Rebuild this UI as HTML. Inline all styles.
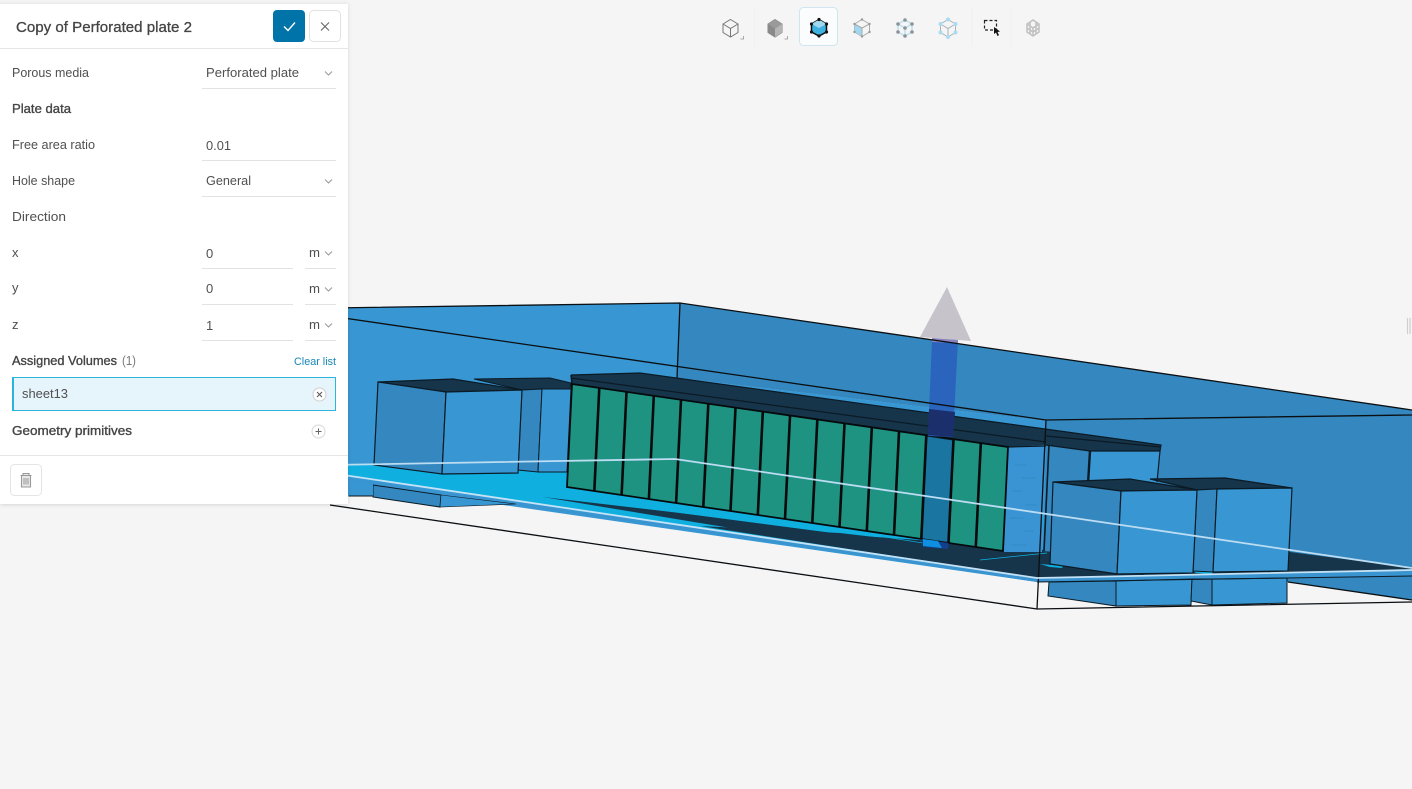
<!DOCTYPE html>
<html><head><meta charset="utf-8"><style>
html,body{margin:0;padding:0;background:#f5f5f5;width:1412px;height:789px;overflow:hidden}
svg{display:block}
text{font-family:"Liberation Sans",sans-serif;font-size:13px;fill:#505050}
.m{stroke:#444;stroke-width:.35;fill:#444}
</style></head><body>
<svg width="1412" height="789" viewBox="0 0 1412 789" xmlns="http://www.w3.org/2000/svg">
<defs><filter id="b" x="-5%" y="-5%" width="110%" height="110%"><feGaussianBlur stdDeviation="2"/></filter></defs>
<rect width="1412" height="789" fill="#f5f5f5"/>
<!-- 3D scene -->
<polygon points="330,308 680,303 677,378 1046,421 1412,415 1412,600 1288,582 1037,582 330,480" fill="#3897d3"/>
<polygon points="680,303 1412,410 1412,600 1288,582 1046,560 1046,421 677,378" fill="#3488bf"/>
<polygon points="1046,421 1412,415 1412,600 1288,582 1046,570" fill="#3488bf"/>
<polygon points="677,378 1046,421 1046,450 672,460" fill="#3897d3"/>
<!-- arrow head -->
<polygon points="947,287 920,337 971,341" fill="#c6c3cb"/>
<!-- floor -->
<polygon points="330,466 675,459 1045,513 1037,578 330,474" fill="#0fb0e0"/>
<polygon points="330,476 1037,578 1412,570 1412,576 1037,582 700,531 500,503 330,479" fill="#3a94cf"/>
<polygon points="543,497 680,513 848,535 990,545 1045,550 1290,552 1412,568 1412,570 1037,578 700,523" fill="#16354a"/>
<polygon points="840,533 1003,552 1010,553 1045,552 1045,578 1037,578 700,526" fill="#16354a"/>
<polygon points="680,505 940,546 925,543 850,531 680,513" fill="#0fb0e0"/>
<polygon points="1040,564 1063,566 1062,568 1050,567" fill="#0fb0e0"/>
<path d="M980,560L1047,553" stroke="#0fb0e0" stroke-width=".8" fill="none"/>
<polygon points="1193,571 1213,572 1212,574 1196,573" fill="#0fb0e0"/>
<!-- lower part of left boxes -->
<polygon points="373,485 441,495 440,507 373,497" fill="#3488bf" stroke="#0b1a25" stroke-width="1"/>
<polygon points="441,495 516,504 440,507" fill="#3897d3" stroke="#0b1a25" stroke-width=".6"/>
<polygon points="330,478 373,484 373,496 330,497" fill="#3897d3"/>
<path d="M349,496L373,496" stroke="#111" stroke-width="1" fill="none"/>
<!-- box B -->
<polygon points="474,379 550,378 571,383 570,389 542,389 522,390" fill="#16354a" stroke="#0b1a25" stroke-width="1"/>
<polygon points="522,390 542,389 538,472 518,470" fill="#3488bf" stroke="#0b1a25" stroke-width="1"/>
<polygon points="542,389 571,389 567,472 538,472" fill="#3897d3" stroke="#0b1a25" stroke-width="1"/>
<!-- box A -->
<polygon points="378,382 453,379 522,390 446,392" fill="#16354a" stroke="#0b1a25" stroke-width="1.2"/>
<polygon points="378,382 446,392 442,474 374,465" fill="#3488bf" stroke="#0b1a25" stroke-width="1.2"/>
<polygon points="446,392 522,390 518,473 442,474" fill="#3897d3" stroke="#0b1a25" stroke-width="1.2"/>
<!-- box C behind -->
<polygon points="1046,445 1090,451 1088,555 1043,551" fill="#3488bf"/>
<polygon points="1090,451 1160,451 1157,490 1088,490" fill="#3897d3"/>
<path d="M1090,451L1088,484" stroke="#0b1a25" stroke-width="2.4" fill="none"/>
<path d="M1160,451L1157,482" stroke="#0b1a25" stroke-width="1.2" fill="none"/>
<path d="M1049,445L1044,551" stroke="#0b1a25" stroke-width="1.6" fill="none"/>
<!-- teal block end -->
<polygon points="1008,447 1045,446 1042,552 1003,552" fill="#3a94d3"/>
<g stroke="#2a7cb0" stroke-width=".7" opacity=".7"><path d="M1015,465h12M1022,478h14M1012,491h10M1025,505h12M1010,518h14M1024,531h10M1012,545h14"/></g>
<!-- dark top -->
<polygon points="571,375 640,373 1161,445 1160,451 1090,451 1046,445 1008,447 572,384" fill="#16354a"/>
<path d="M571,375L640,373L1161,445L1160,451L1090,451L1046,445M572,384L1008,447L1046,446M571,378L1046,442M1046,436L1161,447" stroke="#0b1a25" stroke-width="1.2" fill="none"/>
<path d="M571,375L572,384" stroke="#0b1a25" stroke-width="1.5"/>
<!-- teal panels -->
<polygon points="572,384 1008,447 1003,551 567,487" fill="#1f9382"/>
<polygon points="926,435.500 953.500,439.500 948.500,543 921.500,539.500" fill="#1a76a0"/>
<g stroke="#050a0d" stroke-width="2.6" fill="none">
<path d="M599.300,388L594.300,491M626.500,392L621.600,495M653.800,396L648.900,499M681,400L676.100,503M708.300,404L703.300,507M735.500,408L730.500,511M762.800,412L757.800,515M790,416L785,519M817.300,420L812.300,523M844.500,424L839.500,527M871.800,428L866.800,531M899,432L894,535M926.300,435.500L921.300,539M953.500,439.500L948.500,543M980.800,443.500L975.800,547"/>
<path d="M572,384L1008,447L1003,551L567,487Z" stroke-width="1.8"/>
</g>
<!-- arrow shaft -->
<polygon points="932,339 958,340 953,437 928,436" fill="#2a62bd" opacity=".95"/>
<polygon points="929,409 955,412 953,437 928,435" fill="#1a2f6c"/>
<polygon points="932,338 958,340 958,343 932,342" fill="#8c83bd"/>
<polygon points="921.500,539 948.500,543 948,549 923,547" fill="#153f8c"/>
<polygon points="923,539 938,541 942,548 923,546" fill="#0f8fe0"/>
<path d="M927,436L953,440" stroke="#0b1a25" stroke-width="1"/>
<!-- box D lower -->
<polygon points="1049,582 1116,581 1116,606 1048,596" fill="#3488bf" stroke="#0b1a25" stroke-width="1"/>
<polygon points="1116,581 1192,579 1191,605 1116,606" fill="#3897d3" stroke="#0b1a25" stroke-width="1"/>
<polygon points="1192,579 1212,579 1212,605 1191,601" fill="#3488bf" stroke="#0b1a25" stroke-width="1"/>
<polygon points="1212,579 1287,578 1287,603 1212,605" fill="#3897d3" stroke="#0b1a25" stroke-width="1"/>
<!-- box E -->
<polygon points="1150,479 1225,478 1292,488 1217,489 1197,490" fill="#16354a" stroke="#0b1a25" stroke-width="1.2"/>
<polygon points="1197,490 1217,489 1213,572 1193,571" fill="#3488bf" stroke="#0b1a25" stroke-width="1"/>
<polygon points="1217,489 1292,488 1288,571 1213,572" fill="#3897d3" stroke="#0b1a25" stroke-width="1.2"/>
<!-- box D -->
<polygon points="1053,482 1130,479 1197,490 1121,491" fill="#16354a" stroke="#0b1a25" stroke-width="1.2"/>
<polygon points="1053,482 1121,491 1117,574 1050,564" fill="#3488bf" stroke="#0b1a25" stroke-width="1.2"/>
<polygon points="1121,491 1197,490 1193,573 1117,574" fill="#3897d3" stroke="#0b1a25" stroke-width="1.2"/>
<!-- wall strokes -->
<path d="M330,308L680,303L1412,410M330,316L1046,420L1412,415M680,303L677,378M1046,420L1037,609M330,505L1037,609L1412,602M1288,582L1412,600" stroke="#0b0f12" stroke-width="1.3" fill="none"/>
<path d="M330,465L675,459L1412,568" stroke="#bcdcf2" stroke-width="1.8" fill="none"/>
<path d="M330,473L1037,578L1412,570" stroke="#c4e2f6" stroke-width="1.8" fill="none"/>
<path d="M1037,582L1412,576" stroke="#0b1a25" stroke-width="1" fill="none"/>
<path d="M1407.500,318V334M1410,318V334" stroke="#cfcfcf" stroke-width="1.200"/>

<!-- toolbar -->
<rect x="799.500" y="7.500" width="38" height="38" rx="4" fill="#fafcfd" stroke="#cfe6f2"/>
<path d="M754.500,8V46M972,8V46M1011,8V46" stroke="#f0f0f0" stroke-width="1"/>
<path d="M743.500,36V39H740.500M787.500,36V39H784.500" stroke="#aaa" fill="none"/>
<g fill="none" stroke="#777" stroke-width="1">
<path d="M730.500,19.500L738,24V32.500L730.500,37L723,32.500V24ZM723,24L730.500,28.500L738,24M730.500,28.500V37"/>
</g>
<g>
<polygon points="775,19.500 782,24 782,32.500 775,37 768,32.500 768,24" fill="#8a8a8a" stroke="#888"/>
<polygon points="775,28.500 782,24 782,32.500 775,37" fill="#b5b5b5"/>
<polygon points="768,24 775,19.500 782,24 775,28.500" fill="#9a9a9a"/>
</g>
<g>
<polygon points="819,19.500 826.500,24 826.500,32 819,36 811.500,32 811.500,24" fill="#3fb1e0" stroke="#111" stroke-width="1.500"/>
<polygon points="811.500,24 819,19.500 826.500,24 819,28" fill="#9fd8ef"/>
<circle cx="819" cy="19.500" r="1.600" fill="#111"/><circle cx="826.500" cy="24" r="1.600" fill="#111"/><circle cx="826.500" cy="32" r="1.600" fill="#111"/><circle cx="819" cy="36" r="1.600" fill="#111"/><circle cx="811.500" cy="32" r="1.600" fill="#111"/><circle cx="811.500" cy="24" r="1.600" fill="#111"/>
</g>
<g>
<polygon points="862,19.500 869.500,24 869.500,32 862,36.500 854.500,32 854.500,24" fill="#f5f5f5" stroke="#aaa"/>
<polygon points="854.500,24 862,28 862,36.500 854.500,32" fill="#9fd8ef"/>
<path d="M854.500,24L862,28L869.500,24M862,28V36.500" stroke="#aaa" fill="none"/>
<g fill="#999"><circle cx="862" cy="19.500" r="1.200"/><circle cx="869.500" cy="24" r="1.200"/><circle cx="869.500" cy="32" r="1.200"/><circle cx="862" cy="36.500" r="1.200"/><circle cx="854.500" cy="32" r="1.200"/><circle cx="854.500" cy="24" r="1.200"/></g>
</g>
<g fill="none" stroke="#bcdfee" stroke-width="1.500"><path d="M905,20L912,24V32L905,36L898,32V24ZM898,24L905,28L912,24M905,28V36"/></g>
<g fill="#8d9499"><circle cx="905" cy="20" r="1.800"/><circle cx="912" cy="24" r="1.800"/><circle cx="912" cy="32" r="1.800"/><circle cx="905" cy="36" r="1.800"/><circle cx="898" cy="32" r="1.800"/><circle cx="898" cy="24" r="1.800"/><circle cx="905" cy="28" r="1.800"/></g>
<g fill="none" stroke="#aab2b8" stroke-width="1"><path d="M948,19.500L955.500,24V32.500L948,37L940.500,32.500V24ZM940.500,24L948,28.500L955.500,24M948,28.500V37"/></g>
<g fill="#a8dcf3"><circle cx="948" cy="19.500" r="2"/><circle cx="955.500" cy="24" r="2"/><circle cx="955.500" cy="32.500" r="2"/><circle cx="948" cy="37" r="2"/><circle cx="940.500" cy="32.500" r="2"/><circle cx="940.500" cy="24" r="2"/></g>
<rect x="984.500" y="20.500" width="12" height="9.500" fill="none" stroke="#222" stroke-width="1.200" stroke-dasharray="3 2"/>
<path d="M994,27L994,34L996,32.500L997.500,36L999,35.300L997.500,32L1000,31.500Z" fill="#111"/>
<g fill="none" stroke="#c0c0c0" stroke-width="1.500"><path d="M1033,20L1039,24V32L1033,36L1027,32V24ZM1027,24L1033,28L1039,24M1033,28V36M1030,22V34M1036,22V34M1027,28L1033,32L1039,28"/></g>

<!-- panel -->
<rect x="0" y="4" width="348" height="501" fill="#000" opacity=".12" filter="url(#b)"/>
<rect x="0" y="3" width="348" height="501" fill="#fff"/>
<rect x="0" y="3" width="348" height="1" fill="#ececec"/>
<path d="M0,48.500H348M0,455.500H348" stroke="#e6e6e6"/>
<text x="16" y="32" style="font-size:15px;stroke:#444;stroke-width:.3;fill:#444" textLength="176" lengthAdjust="spacingAndGlyphs">Copy of Perforated plate 2</text>
<rect x="273" y="10" width="32" height="32" rx="4" fill="#0073a8"/>
<path d="M284,26.500L288,30.500L295,22.500" stroke="#fff" stroke-width="1.400" fill="none"/>
<rect x="309.500" y="10.500" width="31" height="31" rx="4" fill="#fff" stroke="#e2e2e2"/>
<path d="M321,22.500L329,30.500M329,22.500L321,30.500" stroke="#666" stroke-width="1.100" fill="none"/>

<text x="12" y="77" textLength="77" lengthAdjust="spacingAndGlyphs">Porous media</text>
<text x="206" y="77" textLength="93" lengthAdjust="spacingAndGlyphs">Perforated plate</text>
<path d="M325,71.500L328.500,75L332,71.500M325,179.500L328.500,183L332,179.500M325,251.500L328.500,255L332,251.500M325,287.500L328.500,291L332,287.500M325,323.500L328.500,327L332,323.500" stroke="#999" fill="none"/>
<path d="M202,88.500H336M202,160.500H336M202,196.500H336M202,268.500H293M305,268.500H336M202,304.500H293M305,304.500H336M202,340.500H293M305,340.500H336" stroke="#e2e2e2"/>
<text class="m" x="12" y="113" textLength="59" lengthAdjust="spacingAndGlyphs">Plate data</text>
<text x="12" y="149" textLength="83" lengthAdjust="spacingAndGlyphs">Free area ratio</text>
<text x="206" y="150" textLength="25" lengthAdjust="spacingAndGlyphs">0.01</text>
<text x="12" y="185" textLength="63" lengthAdjust="spacingAndGlyphs">Hole shape</text>
<text x="206" y="185" textLength="45" lengthAdjust="spacingAndGlyphs">General</text>
<text x="12" y="221" textLength="54" lengthAdjust="spacingAndGlyphs">Direction</text>
<text x="12" y="257">x</text>
<text x="206" y="258">0</text>
<text x="309" y="257" textLength="11" lengthAdjust="spacingAndGlyphs">m</text>
<text x="12" y="292">y</text>
<text x="206" y="293">0</text>
<text x="309" y="293" textLength="11" lengthAdjust="spacingAndGlyphs">m</text>
<text x="12" y="329">z</text>
<text x="206" y="330">1</text>
<text x="309" y="329" textLength="11" lengthAdjust="spacingAndGlyphs">m</text>
<text class="m" x="12" y="365" textLength="105" lengthAdjust="spacingAndGlyphs">Assigned Volumes</text>
<text x="122" y="365" textLength="14" lengthAdjust="spacingAndGlyphs" style="fill:#777">(1)</text>
<text x="294" y="365" textLength="42" lengthAdjust="spacingAndGlyphs" style="font-size:11px;fill:#1787b8">Clear list</text>
<rect x="12.500" y="377.500" width="323" height="33" fill="#e6f4fb" stroke="#2bb4de"/>
<rect x="12" y="377" width="2" height="34" fill="#2bb4de"/>
<text x="22" y="398" textLength="46" lengthAdjust="spacingAndGlyphs">sheet13</text>
<circle cx="319.500" cy="394.500" r="6.500" fill="#fff" stroke="#d0d0d0"/>
<path d="M317,392L322,397M322,392L317,397" stroke="#555" fill="none"/>
<text class="m" x="12" y="435" textLength="120" lengthAdjust="spacingAndGlyphs">Geometry primitives</text>
<circle cx="318.500" cy="431.500" r="6.500" fill="#fff" stroke="#d8d8d8"/>
<path d="M315.500,431.500H321.500M318.500,428.500V434.500" stroke="#666" fill="none"/>
<rect x="10.500" y="464.500" width="31" height="31" rx="4" fill="#fff" stroke="#e4e4e4"/>
<path d="M20.500,475.500H31.500M23,475V473.500H29V475M21.500,476V487H30.500V476" stroke="#999" stroke-width="1.100" fill="#e8e8e8"/>
<path d="M24,478V484.500M26,478V484.500M28,478V484.500" stroke="#999" fill="none"/>
</svg>
</body></html>
